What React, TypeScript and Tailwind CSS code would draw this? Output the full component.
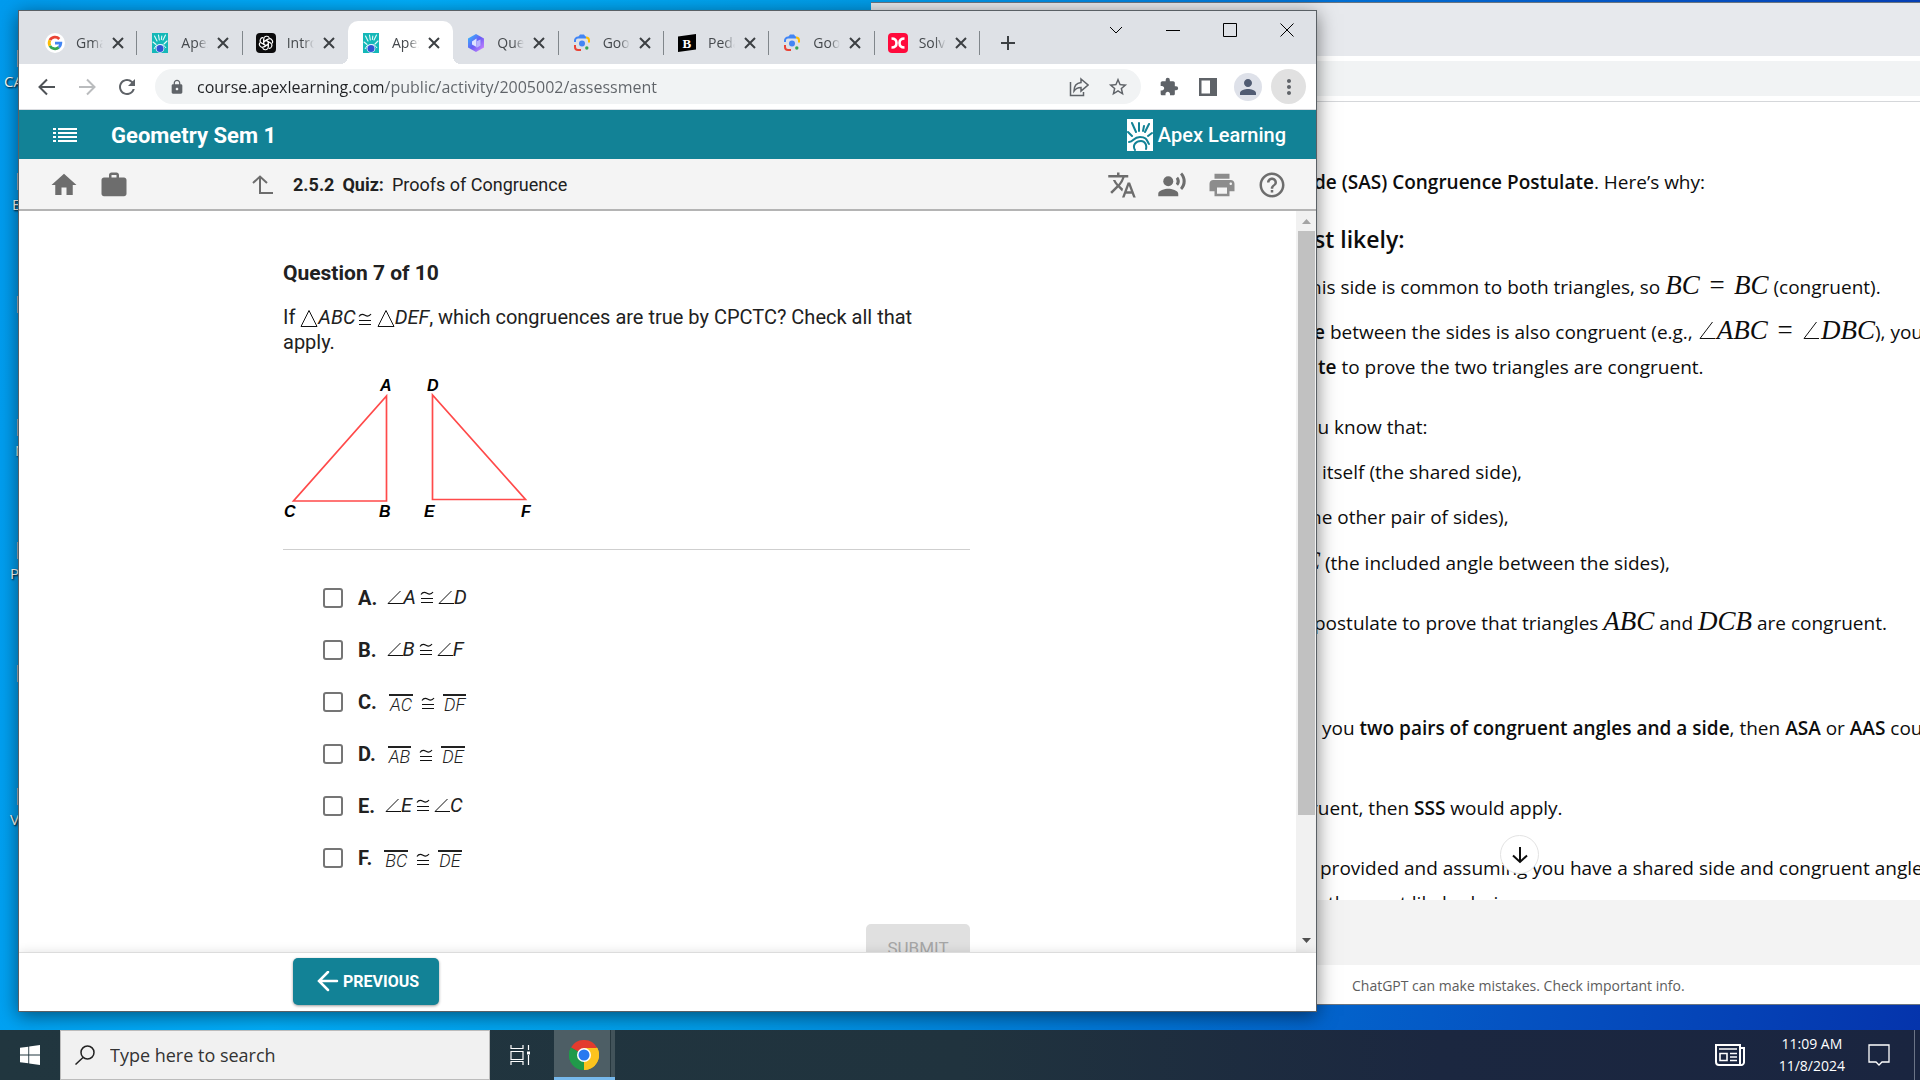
import * as React from "react";
import {
  MdExtension,
  MdHelpOutline,
  MdHome,
  MdLock,
  MdMoreVert,
  MdPerson,
  MdPrint,
  MdRecordVoiceOver,
  MdRefresh,
  MdStarBorder,
  MdTranslate,
  MdWork,
} from "react-icons/md";

/* ---------- favicons and logos ---------- */

function GoogleIcon() {
  return (
    <svg viewBox="0 0 20 20" className="w-5 h-5">
      <circle cx="10" cy="10" r="10" fill="#fff" />
      <g fill="none" strokeWidth="2.8">
        <path d="M14.3 6A5.8 5.8 0 0 0 4.9 7.2" stroke="#ea4335" />
        <path d="M4.9 7.2a5.8 5.8 0 0 0 0 5.6" stroke="#fbbc05" />
        <path d="M4.9 12.8a5.8 5.8 0 0 0 8.9 1.6" stroke="#34a853" />
        <path d="M13.8 14.4a5.8 5.8 0 0 0 2-4.2H10" stroke="#4285f4" />
      </g>
    </svg>
  );
}

function ApexFavicon() {
  return (
    <svg viewBox="0 0 20 20" className="w-5 h-5">
      <rect x="2" width="16" height="20" fill="#14b8b8" />
      <g stroke="#e6fbfb" strokeWidth="1.1" strokeLinecap="round">
        <path d="M4.500 3l2.500 5M8.500 2l.8 5M15.500 2L13 7M3 9l3 2.500M17 8l-3 3M11.800 3l-.4 3.500" />
      </g>
      <path d="M4 16a6.500 6.500 0 0 1 12-1" stroke="#e6fbfb" strokeWidth="1" fill="none" />
      <circle cx="10" cy="15.500" r="4.300" fill="#e8eefc" />
      <circle cx="10" cy="15.500" r="3.500" fill="#2f55d4" />
    </svg>
  );
}

function OpenAiIcon() {
  return (
    <svg viewBox="0 0 20 20" className="w-5 h-5">
      <rect width="20" height="20" rx="4" fill="#0b0b0c" />
      <g fill="none" stroke="#fff" strokeWidth="1.1">
        {[0, 60, 120, 180, 240, 300].map((deg) => (
          <path
            key={deg}
            d="M7.700 11.300V6.300c0-3.400 4.600-4.100 5.600-1.300M7.700 8.700l4.500-2.600"
            transform={`rotate(${deg} 10 10)`}
          />
        ))}
      </g>
    </svg>
  );
}

function QuestionAiIcon() {
  return (
    <svg viewBox="0 0 20 20" className="w-5 h-5">
      <defs>
        <linearGradient id="hex" x1="0" y1="0" x2="1" y2="1">
          <stop offset="0" stopColor="#2cc4ff" />
          <stop offset="0.5" stopColor="#6a5cf5" />
          <stop offset="1" stopColor="#e08cff" />
        </linearGradient>
      </defs>
      <path d="M10 1l8 4.500v9L10 19l-8-4.500v-9z" fill="url(#hex)" />
      <path d="M6 8.500l4.500-3v8.500L6 11.500z" fill="#dfe4ff" />
      <path d="M11 8l3.500-1.500v6L10.500 15z" fill="#b9b4ff" />
    </svg>
  );
}

function LensIcon() {
  return (
    <svg viewBox="0 0 20 20" className="w-5 h-5">
      <g fill="none" strokeWidth="2">
        <path d="M3 9V7.500A3 3 0 0 1 6 4.500h8" stroke="#4285f4" />
        <path d="M7 4.500l1.500-2h3l1.500 2" stroke="#4285f4" fill="#4285f4" />
        <path d="M14 4.500a3 3 0 0 1 3 3V9.500" stroke="#fbbc04" />
        <path d="M3 12v2a3 3 0 0 0 3 3h3" stroke="#ea4335" />
      </g>
      <circle cx="10" cy="10.500" r="3" fill="#4285f4" />
      <circle cx="14.800" cy="15" r="1.700" fill="#34a853" />
    </svg>
  );
}

function BrainlyIcon() {
  return (
    <svg viewBox="0 0 20 20" className="w-5 h-5">
      <path d="M1 3.500L19 1v15.500L1 19z" fill="#000" />
      <text x="5.500" y="14.500" fontSize="13" fontWeight="700" fill="#fff" fontFamily="Liberation Serif, serif">
        B
      </text>
    </svg>
  );
}

function SolverIcon() {
  return (
    <svg viewBox="0 0 20 20" className="w-5 h-5">
      <rect width="20" height="20" rx="4" fill="#ff0a3c" />
      <path d="M3.500 5.500c4 0 5 2 5 4.500s-1 4.500-5 4.500M16.500 5.500c-4 0-5 2-5 4.500s1 4.500 5 4.500" fill="none" stroke="#fff" strokeWidth="2.600" />
    </svg>
  );
}

function ApexLogo() {
  return (
    <svg viewBox="0 0 26 32" className="w-[26px] h-8">
      <rect width="26" height="32" fill="#fff" />
      <g stroke="#128296" strokeWidth="2" strokeLinecap="round" fill="none">
        <path d="M5 4l4 9M12 4v8M22 5l-4 8M1 13l4 4M25 14l-4 3M17 7l-1 5" />
        <path d="M2 23c5 0 4-5 11-5s7 4 9 7" />
        <path d="M8 31c-3-5 1-9 6-9 4 0 6 4 5 8" />
      </g>
    </svg>
  );
}

function ChromeLogo() {
  return (
    <svg viewBox="0 0 30 30" className="w-[30px] h-[30px]">
      <path d="M15 15L2 7.500A15 15 0 0 1 28 7.500z" fill="#e33b2e" />
      <path d="M15 15L28 7.500A15 15 0 0 1 15 30z" fill="#fcc31e" />
      <path d="M15 15v15A15 15 0 0 1 2 7.500z" fill="#219a4a" />
      <path d="M15 8h13.300A15 15 0 0 1 15 30l6-11z" fill="#fcc31e" />
      <path d="M2 7.500L9 19l6 3-1.500 8A15 15 0 0 1 2 7.500z" fill="#219a4a" />
      <circle cx="15" cy="15" r="7" fill="#fff" />
      <circle cx="15" cy="15" r="5.500" fill="#2a7af0" />
    </svg>
  );
}

/* ---------- maths symbols ---------- */

function Angle() {
  return (
    <svg viewBox="0 0 16 16" className="inline-block w-4 h-4 align-[-2px]" fill="none" stroke="#111">
      <path d="M13.500 2L1 14.500h15" />
    </svg>
  );
}

function TexAngle() {
  return (
    <svg viewBox="0 0 19 19" className="inline-block w-[19px] h-[19px] align-[-1px]" fill="none" stroke="#111">
      <path d="M14.500 1L2 17.500h15" />
    </svg>
  );
}

function Congruent() {
  return (
    <svg viewBox="0 0 14 14" className="inline-block w-[14px] h-[14px]" fill="none" stroke="#111" strokeWidth="1.200">
      <path d="M1 4.500C3 1.500 5 2.200 7 3.300S11 4.800 13 2M1 8.500h12M1 12.500h12" />
    </svg>
  );
}

function Triangle() {
  return (
    <svg viewBox="0 0 18 20" className="inline-block w-[18px] h-5 align-[-4px]" fill="none" stroke="#111">
      <path d="M9 2.500L1 18.500h16z" />
    </svg>
  );
}

function Seg({ children }: { children: string }) {
  return <span className="border-t-2 border-[#222] px-px pt-px text-[18px] leading-4 italic font-light">{children}</span>;
}

/* ---------- quiz window ---------- */

const tabs = [
  { title: "Gmail", icon: <GoogleIcon /> },
  { title: "Apex", icon: <ApexFavicon /> },
  { title: "Introd", icon: <OpenAiIcon /> },
  { title: "Apex", icon: <ApexFavicon />, active: true },
  { title: "Quest", icon: <QuestionAiIcon /> },
  { title: "Goog", icon: <LensIcon /> },
  { title: "Peda", icon: <BrainlyIcon /> },
  { title: "Goog", icon: <LensIcon /> },
  { title: "Solve", icon: <SolverIcon /> },
];

function TabStrip() {
  return (
    <div className="flex h-[53px] shrink-0 bg-[#dee1e6] pl-[13px]">
      <div className="flex w-[948px] items-end">
        {tabs.map((tab, i) => (
          <div
            key={i}
            className={
              tab.active
                ? "relative flex h-[43px] flex-1 items-center rounded-t-[10px] bg-white pl-[13px]"
                : "flex h-[43px] flex-1 items-center pl-[13px]"
            }
          >
            {tab.active && (
              <>
                <span className="absolute -left-2 bottom-0 h-2 w-2 bg-[radial-gradient(circle_at_0_0,#dee1e6_8px,#fff_8px)]" />
                <span className="absolute -right-2 bottom-0 h-2 w-2 bg-[radial-gradient(circle_at_100%_0,#dee1e6_8px,#fff_8px)]" />
              </>
            )}
            {tab.icon}
            <span className="ml-[11px] w-[27px] overflow-hidden whitespace-nowrap text-[14px] text-[#45494d] [mask-image:linear-gradient(to_right,#000_60%,transparent)]">
              {tab.title}
            </span>
            <button aria-label="Close tab" className="ml-[9px]">
              <svg viewBox="0 0 12 12" className="w-3 h-3" stroke="#3c4043" strokeWidth="2">
                <path d="M1 1l10 10M11 1L1 11" />
              </svg>
            </button>
            {i !== 2 && i !== 3 && <span className="ml-auto h-6 w-px bg-[#80868b]" />}
          </div>
        ))}
      </div>
      <button aria-label="New tab" className="mt-[10px] ml-5 h-[43px]">
        <svg viewBox="0 0 16 16" className="w-4 h-4" stroke="#3c4043" strokeWidth="2">
          <path d="M8 1v14M1 8h14" />
        </svg>
      </button>
      <div className="mr-px ml-auto flex h-[38px] text-black">
        <button aria-label="Search tabs" className="flex w-[57px] items-center justify-center">
          <svg viewBox="0 0 14 14" className="w-[14px] h-[14px]" fill="none" stroke="currentColor">
            <path d="M1 4l6 6 6-6" />
          </svg>
        </button>
        <button aria-label="Minimize" className="flex w-[57px] items-center justify-center">
          <svg viewBox="0 0 14 14" className="w-[14px] h-[14px]" stroke="currentColor">
            <path d="M0 7.500h14" />
          </svg>
        </button>
        <button aria-label="Maximize" className="flex w-[57px] items-center justify-center">
          <svg viewBox="0 0 14 14" className="w-[14px] h-[14px]" fill="none" stroke="currentColor">
            <path d="M.5.5h13v13H.5z" />
          </svg>
        </button>
        <button aria-label="Close" className="flex w-[57px] items-center justify-center">
          <svg viewBox="0 0 14 14" className="w-[14px] h-[14px]" stroke="currentColor">
            <path d="M.5.5l13 13M13.500.5l-13 13" />
          </svg>
        </button>
      </div>
    </div>
  );
}

function Toolbar() {
  return (
    <div className="flex h-[46px] shrink-0 items-center border-b border-[#dadce0] bg-white pr-[10px] pl-[18px] text-[#5f6368]">
      <button aria-label="Back">
        <svg viewBox="0 0 20 20" className="w-5 h-5" fill="none" stroke="#4f5357" strokeWidth="2">
          <path d="M18 10H3M10 2.500L2.500 10l7.500 7.500" />
        </svg>
      </button>
      <button aria-label="Forward" className="ml-5">
        <svg viewBox="0 0 20 20" className="w-5 h-5" fill="none" stroke="#babcbe" strokeWidth="2">
          <path d="M2 10h15M10 2.500l7.500 7.500-7.500 7.500" />
        </svg>
      </button>
      <button aria-label="Reload" className="ml-[18px]">
        <MdRefresh className="w-6 h-6" />
      </button>
      <div className="ml-4 flex h-[35px] flex-1 items-center rounded-full bg-[#f1f3f4] pr-3 pl-[14px]">
        <MdLock className="w-4 h-4" />
        <input
          aria-label="Address"
          defaultValue="course.apexlearning.com/public/activity/2005002/assessment"
          className="ml-3 min-w-0 flex-1 bg-[linear-gradient(to_right,#202124_186px,#5f6368_186px)] bg-clip-text text-[16px] text-transparent outline-none"
        />
        <button aria-label="Share">
          <svg viewBox="0 0 20 20" className="w-5 h-5" fill="none" stroke="#5f6368" strokeWidth="1.500">
            <path d="M1.500 5v13.500h13V15M12 2l7 6-7 6v-3.500c-3 0-5 .5-7 3.500 0-5 3-8 7-8.500z" />
          </svg>
        </button>
        <button aria-label="Bookmark" className="ml-[18px]">
          <MdStarBorder className="w-[22px] h-[22px]" />
        </button>
      </div>
      <button aria-label="Extensions" className="ml-[18px]">
        <MdExtension className="w-5 h-5" />
      </button>
      <button aria-label="Side panel" className="ml-5">
        <svg viewBox="0 0 18 18" className="w-[18px] h-[18px]">
          <path d="M0 0h18v18H0zM2.500 2.500v13H11v-13z" fill="#5f6368" fillRule="evenodd" />
        </svg>
      </button>
      <button aria-label="Profile" className="ml-[17px] flex h-7 w-7 items-center justify-center rounded-full bg-[#dee1e9]">
        <MdPerson className="w-6 h-6 text-[#515c73]" />
      </button>
      <button aria-label="Menu" className="ml-[9px] flex h-[35px] w-[35px] items-center justify-center rounded-full bg-[#e1e1e1]">
        <MdMoreVert className="w-6 h-6" />
      </button>
    </div>
  );
}

function CourseHeader() {
  return (
    <header className="flex h-[49px] shrink-0 items-center bg-[#128296] pt-px pr-[30px] pl-[34px] text-white">
      <button aria-label="Contents">
        <svg viewBox="0 0 24 14" className="w-6 h-[14px]" fill="#fff">
          <path d="M0 0h3v2H0zM5 0h19v2H5zM0 4h3v2H0zM5 4h19v2H5zM0 8h3v2H0zM5 8h19v2H5zM0 12h3v2H0zM5 12h19v2H5z" />
        </svg>
      </button>
      <h1 className="ml-[34px] font-[Roboto] text-[22px] font-bold">Geometry Sem 1</h1>
      <div className="ml-auto flex items-center gap-[5px]">
        <ApexLogo />
        <span className="font-[Roboto] text-[20px] font-medium">Apex Learning</span>
      </div>
    </header>
  );
}

function ActivityBar() {
  return (
    <nav className="flex h-[52px] shrink-0 items-center border-b-2 border-[#b4b4b4] bg-[#f4f4f4] pt-px pr-[29px] pl-[30px] font-[Roboto] text-[18px] text-[#212121]">
      <a href="#" aria-label="Home">
        <MdHome className="w-[30px] h-[30px] text-[#6d6d6d]" />
      </a>
      <a href="#" aria-label="Portfolio" className="ml-5">
        <MdWork className="w-[30px] h-[30px] text-[#6d6d6d]" />
      </a>
      <a href="#" aria-label="Up one level" className="ml-[123px]">
        <svg viewBox="0 0 22 20" className="w-[22px] h-5" fill="none" stroke="#6d6d6d" strokeWidth="2">
          <path d="M1 8l7-6.500L15 8M8 2v16h13" />
        </svg>
      </a>
      <b className="ml-[19px]">2.5.2</b>
      <b className="ml-2">Quiz:</b>
      <span className="ml-2">Proofs of Congruence</span>
      <div className="ml-auto flex items-center gap-5 text-[#6d6d6d]">
        <button aria-label="Translate">
          <MdTranslate className="w-[30px] h-[30px]" />
        </button>
        <button aria-label="Read aloud">
          <MdRecordVoiceOver className="w-[30px] h-[30px]" />
        </button>
        <button aria-label="Print">
          <MdPrint className="w-[30px] h-[30px] text-[#8c8c8c]" />
        </button>
        <button aria-label="Help">
          <MdHelpOutline className="w-[30px] h-[30px]" />
        </button>
      </div>
    </nav>
  );
}

function TrianglesFigure() {
  return (
    <svg
      viewBox="0 0 260 147"
      className="mt-5 h-[147px] w-[260px]"
      fontFamily="Liberation Sans, sans-serif"
      fontSize="16"
      fontWeight="700"
      fontStyle="italic"
    >
      <path d="M103.500 21v105H10.500zM149.500 20v104.500H242.500z" fill="none" stroke="#ff4a4a" strokeWidth="1.700" />
      <text x="97" y="16">A</text>
      <text x="144" y="16">D</text>
      <text x="1" y="142">C</text>
      <text x="96" y="142">B</text>
      <text x="141" y="142">E</text>
      <text x="238" y="142">F</text>
    </svg>
  );
}

const answers = [
  { letter: "A", kind: "angle", left: "A", right: "D" },
  { letter: "B", kind: "angle", left: "B", right: "F" },
  { letter: "C", kind: "segment", left: "AC", right: "DF" },
  { letter: "D", kind: "segment", left: "AB", right: "DE" },
  { letter: "E", kind: "angle", left: "E", right: "C" },
  { letter: "F", kind: "segment", left: "BC", right: "DE" },
];

function AnswerList() {
  return (
    <ul className="mt-[22px] pl-10">
      {answers.map((answer) => (
        <li key={answer.letter} className="flex h-[52px] items-center">
          <input
            type="checkbox"
            id={`answer-${answer.letter}`}
            className="h-5 w-5 appearance-none rounded-[3px] border-2 border-[#757575] bg-white"
          />
          <label htmlFor={`answer-${answer.letter}`} className="ml-[15px] flex items-center">
            <b>{answer.letter}.</b>
            {answer.kind === "angle" ? (
              <span className="ml-[10px] flex items-center pb-[2px] italic">
                <Angle />
                {answer.left}
                <span className="mx-[4px] flex">
                  <Congruent />
                </span>
                <Angle />
                {answer.right}
              </span>
            ) : (
              <span className="ml-3 flex items-center pt-[2px]">
                <Seg>{answer.left}</Seg>
                <span className="mx-2 flex">
                  <Congruent />
                </span>
                <Seg>{answer.right}</Seg>
              </span>
            )}
          </label>
        </li>
      ))}
    </ul>
  );
}

function Scrollbar() {
  return (
    <div className="flex w-5 shrink-0 flex-col items-center bg-[#f1f1f1]">
      <svg viewBox="0 0 20 20" className="h-5 w-5 shrink-0" fill="#a3a3a3">
        <path d="M6 13h9l-4.500-5z" />
      </svg>
      <div className="h-[584px] w-[17px] shrink-0 bg-[#c1c1c1]" />
      <svg viewBox="0 0 20 20" className="mt-auto h-6 w-5 shrink-0" fill="#505050">
        <path d="M6 8h9l-4.500 5z" />
      </svg>
    </div>
  );
}

function QuizWindow() {
  return (
    <section className="absolute top-[10px] right-[603px] bottom-[18px] left-[18px] flex flex-col overflow-hidden border border-[#5a6065] bg-white shadow-[0_4px_18px_rgba(0,0,0,0.5)]">
      <TabStrip />
      <Toolbar />
      <CourseHeader />
      <ActivityBar />
      <div className="flex min-h-0 flex-1">
        <main className="flex-1 overflow-hidden pl-[264px] font-[Roboto] text-[20px] leading-6 text-[#212121]">
          <div className="w-[687px] pt-[50px]">
            <h2 className="text-[21px] font-bold">Question 7 of 10</h2>
            <p className="mt-5 max-w-[660px] leading-[25px]">
              If <Triangle />
              <i>ABC</i>
              <span className="ml-[2px]">
                <Congruent />
              </span>{" "}
              <Triangle />
              <i>DEF</i>, which congruences are true by CPCTC? Check all that apply.
            </p>
            <TrianglesFigure />
            <hr className="mt-[27px] border-[#cfcfcf]" />
            <AnswerList />
            <div className="mt-10 flex justify-end">
              <button disabled className="h-[47px] w-[104px] rounded-[5px] bg-[#e0e0e0] text-[17px] text-[#a6a6a6]">
                SUBMIT
              </button>
            </div>
          </div>
        </main>
        <Scrollbar />
      </div>
      <footer className="relative flex h-[59px] shrink-0 items-start border-t border-[#dcdcdc] bg-white pt-[5px] pl-[274px] shadow-[0_0_10px_rgba(0,0,0,0.12)]">
        <button className="flex h-[47px] w-[146px] items-center justify-center gap-1 rounded-[5px] bg-[#128296] pt-px pl-1 font-[Roboto] text-[16px] font-bold text-white shadow-[0_1px_3px_rgba(0,0,0,0.4)]">
          <svg viewBox="0 0 22 22" className="w-[22px] h-[22px]" fill="none" stroke="#fff" strokeWidth="2.500" strokeLinecap="round">
            <path d="M20 10H3M11 1l-9 9 9 9" />
          </svg>
          PREVIOUS
        </button>
      </footer>
    </section>
  );
}

/* ---------- chat window behind ---------- */

function Tex({ children }: { children: React.ReactNode }) {
  return <i className="font-['Liberation_Serif',serif] text-[27px] leading-6">{children}</i>;
}

function ChatWindow() {
  return (
    <section className="absolute top-[2px] right-0 bottom-[25px] left-[871px] flex flex-col overflow-hidden border-t border-b border-[#6b7580] bg-white">
      <div className="h-[53px] shrink-0 bg-[#e7e9ed]" />
      <div className="flex h-[46px] shrink-0 items-center border-b border-[#d5d7da]">
        <div className="h-[35px] flex-1 bg-[#f1f3f4]" />
      </div>
      <div className="relative min-h-0 flex-1 overflow-hidden pl-[443px] text-[19px] leading-7 whitespace-nowrap text-[#0d0d0d]">
        <p className="mt-[66px]">
          <b className="font-semibold">de (SAS) Congruence Postulate</b>. Here’s why:
        </p>
        <h3 className="mt-[29px] text-[23px] font-semibold">st likely:</h3>
        <p className="mt-5 -ml-1">
          his side is common to both triangles, so <Tex>BC</Tex>
          <span className="mx-2">
            <Tex>=</Tex>
          </span>
          <Tex>BC</Tex> (congruent).
        </p>
        <p className="mt-[17px]">
          <b className="font-semibold">e</b> between the sides is also congruent (e.g., <TexAngle />
          <Tex>ABC</Tex>
          <span className="mx-2">
            <Tex>=</Tex>
          </span>
          <TexAngle />
          <Tex>DBC</Tex>), you
        </p>
        <p className="mt-[7px] ml-1">
          <b className="font-semibold">te</b> to prove the two triangles are congruent.
        </p>
        <p className="mt-8 -ml-2">ou know that:</p>
        <p className="mt-[17px] ml-2">itself (the shared side),</p>
        <p className="mt-[17px] -ml-1">he other pair of sides),</p>
        <p className="mt-[18px] -ml-3">
          <Tex>C</Tex> (the included angle between the sides),
        </p>
        <p className="mt-8">
          postulate to prove that triangles <Tex>ABC</Tex> and <Tex>DCB</Tex> are congruent.
        </p>
        <p className="mt-[77px] ml-2">
          you <b className="font-semibold">two pairs of congruent angles and a side</b>, then{" "}
          <b className="font-semibold">ASA</b> or <b className="font-semibold">AAS</b> cou
        </p>
        <p className="mt-[52px] -ml-1">
          ruent, then <b className="font-semibold">SSS</b> would apply.
        </p>
        <p className="mt-8 ml-[6px]">provided and assuming you have a shared side and congruent angles</p>
        <p className="mt-[7px] ml-[14px]">the most likely choice.</p>
        <button
          aria-label="Scroll to bottom"
          className="absolute bottom-[26px] left-[629px] flex h-[39px] w-[39px] items-center justify-center rounded-full border border-[#e3e3e3] bg-white"
        >
          <svg viewBox="0 0 18 18" className="w-[18px] h-[18px]" fill="none" stroke="#0d0d0d" strokeWidth="2">
            <path d="M9 1v15M2 9.500L9 16l7-6.500" />
          </svg>
        </button>
      </div>
      <div className="h-[65px] shrink-0 bg-[#f3f3f3]" />
      <p className="h-[39px] shrink-0 pl-[481px] text-[14px] leading-[41px] text-[#5d5d5d]">
        ChatGPT can make mistakes. Check important info.
      </p>
    </section>
  );
}

/* ---------- desktop and taskbar ---------- */

const shortcuts = [
  { label: "CA", indent: "ml-1" },
  { label: "E", indent: "ml-3" },
  { label: "", indent: "" },
  { label: "N", indent: "ml-[15px]" },
  { label: "Po", indent: "ml-[10px]" },
  { label: "", indent: "" },
  { label: "V", indent: "ml-[10px]" },
];

function DesktopLabels() {
  return (
    <ul className="w-[60px] pt-[50px] text-[15px] leading-5 text-white [text-shadow:1px_1px_2px_#000]">
      {shortcuts.map((item, i) => (
        <li key={i} className="h-[123px]">
          <span className="ml-[17px] block h-[17px] w-1 bg-[#a9b4bd]" />
          <span className={`mt-1 block ${item.indent}`}>{item.label}</span>
        </li>
      ))}
    </ul>
  );
}

function Taskbar() {
  return (
    <div className="flex h-[50px] shrink-0 items-stretch bg-[linear-gradient(to_right,#21363f,#20333e_50%,#1b2740_75%,#1a2540)] text-white">
      <button aria-label="Start" className="flex w-[60px] items-center justify-center">
        <svg viewBox="0 0 20 20" className="w-5 h-5" fill="#fff">
          <path d="M0 2.800L8.300 1.700v7.800H0zM9.200 1.500L20 0v9.500H9.200zM0 10.500h8.300v7.800L0 17.200zM9.200 10.500H20V20L9.200 18.500z" />
        </svg>
      </button>
      <label className="flex w-[430px] items-center border border-[#bcbcbc] bg-[#f1f1f1] pl-[14px]">
        <svg viewBox="0 0 20 20" className="w-5 h-5" fill="none" stroke="#222" strokeWidth="1.500">
          <circle cx="12.500" cy="7.500" r="6.500" />
          <path d="M8 12.500L.5 19.500" />
        </svg>
        <input
          type="text"
          aria-label="Search"
          placeholder="Type here to search"
          className="ml-[15px] flex-1 text-[18px] text-[#333] outline-none placeholder:text-[#333]"
        />
      </label>
      <button aria-label="Task view" className="flex w-16 items-center justify-center pr-1">
        <svg viewBox="0 0 20 20" className="w-5 h-5" fill="none" stroke="#fff" strokeWidth="1.200">
          <path d="M1 0v3.500h12V0M1 6.500h12v8H1zM1 20v-3.500h12V20M18.500 0v5M18.500 10v10" />
          <path d="M17 6.500h3v3h-3z" fill="#fff" stroke="none" />
        </svg>
      </button>
      <button aria-label="Chrome" className="flex border-b-[3px] border-[#76b9ed]">
        <span className="flex h-full w-14 items-center justify-center bg-[#4d5e65] pt-[3px] pl-1">
          <ChromeLogo />
        </span>
        <span className="h-full w-[5px] border-l border-[#27383f] bg-[#42535a]" />
      </button>
      <div className="ml-auto flex items-center">
        <button aria-label="News">
          <svg viewBox="0 0 30 22" className="w-[30px] h-[22px]" fill="none" stroke="#fff" strokeWidth="2">
            <path d="M1 1h24v20H4a3 3 0 0 1-3-3zM25 4h4v14a3 3 0 0 1-4 3" />
            <path d="M5 9.500h7v7H5zM4 5h18M15 9.500h7M15 13h7M15 16.500h7" strokeWidth="1.600" />
          </svg>
        </button>
        <div className="ml-[34px] text-center text-[14px] leading-[22px]">
          <div>11:09 AM</div>
          <div>11/8/2024</div>
        </div>
        <button aria-label="Notifications" className="ml-[23px]">
          <svg viewBox="0 0 22 22" className="w-[22px] h-[22px]" fill="none" stroke="#fff" strokeWidth="1.300">
            <path d="M1 1h20v17h-7l-3 3-3-3H1z" />
          </svg>
        </button>
        <span className="ml-6 h-[50px] w-[6px] border-l border-[#6b7487]" />
      </div>
    </div>
  );
}

export default function App() {
  return (
    <div className="flex h-screen flex-col overflow-hidden font-['Open_Sans','Noto_Sans',sans-serif]">
      <div className="relative flex-1 overflow-hidden bg-[linear-gradient(98deg,#009bee,#00aefa_20%,#009ce8_42%,#0078d8_60%,#0553c2_80%,#0534ac)]">
        <DesktopLabels />
        <ChatWindow />
        <QuizWindow />
      </div>
      <Taskbar />
    </div>
  );
}
